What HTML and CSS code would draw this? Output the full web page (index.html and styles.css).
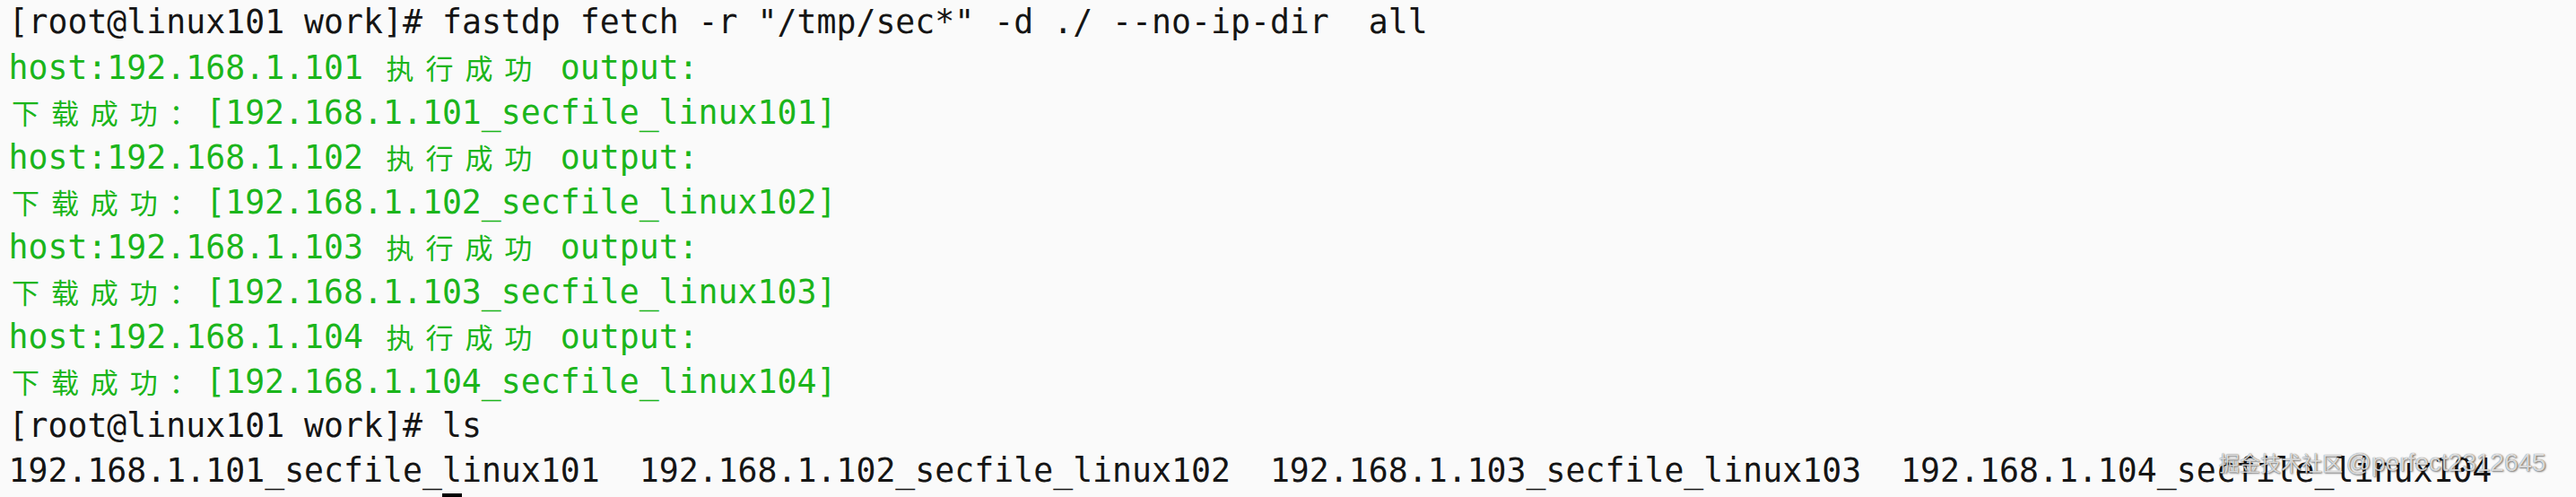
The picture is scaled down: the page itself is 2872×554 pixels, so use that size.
FILE: index.html
```html
<!DOCTYPE html>
<html lang="zh-CN">
<head>
<meta charset="utf-8">
<title>terminal</title>
<link rel="stylesheet" href="styles.css">
</head>
<body>
<div class="term">
  <div class="line">[root@linux101 work]# fastdp fetch -r "/tmp/sec*" -d ./ --no-ip-dir  all</div>
  <div class="line ok">host:192.168.1.101 <span class="w">执</span><span class="w">行</span><span class="w">成</span><span class="w">功</span> output:</div>
  <div class="line ok"><span class="w">下</span><span class="w">载</span><span class="w">成</span><span class="w">功</span><span class="w">：</span>[192.168.1.101_secfile_linux101]</div>
  <div class="line ok">host:192.168.1.102 <span class="w">执</span><span class="w">行</span><span class="w">成</span><span class="w">功</span> output:</div>
  <div class="line ok"><span class="w">下</span><span class="w">载</span><span class="w">成</span><span class="w">功</span><span class="w">：</span>[192.168.1.102_secfile_linux102]</div>
  <div class="line ok">host:192.168.1.103 <span class="w">执</span><span class="w">行</span><span class="w">成</span><span class="w">功</span> output:</div>
  <div class="line ok"><span class="w">下</span><span class="w">载</span><span class="w">成</span><span class="w">功</span><span class="w">：</span>[192.168.1.103_secfile_linux103]</div>
  <div class="line ok">host:192.168.1.104 <span class="w">执</span><span class="w">行</span><span class="w">成</span><span class="w">功</span> output:</div>
  <div class="line ok"><span class="w">下</span><span class="w">载</span><span class="w">成</span><span class="w">功</span><span class="w">：</span>[192.168.1.104_secfile_linux104]</div>
  <div class="line">[root@linux101 work]# ls</div>
  <div class="line">192.168.1.101_secfile_linux101  192.168.1.102_secfile_linux102  192.168.1.103_secfile_linux103  192.168.1.104_secfile_linux104</div>
  <div class="cursor-row"><span class="cursor"></span></div>
</div>
<div class="watermark"><span class="wm-cjk">掘金技术社区</span> <span class="wm-lat">@perfect2312645</span></div>
</body>
</html>
```

FILE: styles.css
```css
html, body {
  margin: 0;
  padding: 0;
  background: #fafafa;
  overflow: hidden;
}
body {
  width: 2872px;
  height: 554px;
  position: relative;
}
.term {
  padding-left: 9.5px;
  font-family: "DejaVu Sans Mono", "Noto Sans CJK SC", monospace;
  font-size: 36.5px;
  color: #151515;
}
.line {
  height: 50px;
  line-height: 50px;
  white-space: pre;
}
.ok {
  color: #1bb51b;
}
.w {
  display: inline-block;
  width: 43.94px;
  text-align: center;
  font-family: "Noto Sans CJK SC", sans-serif;
  font-size: 31px;
  line-height: 50px;
  vertical-align: baseline;
  text-indent: -6px;
}
.cursor-row {
  display: flex;
  height: 4px;
  padding-left: 483.3px;
}
.cursor {
  width: 22px;
  height: 4px;
  background: #000;
}
.watermark {
  position: absolute;
  left: 2474px;
  top: 500px;
  line-height: 30px;
  white-space: nowrap;
  color: rgba(255, 255, 255, 0.78);
  text-shadow: 0 0 1px rgba(0, 0, 0, 0.6), 1px 1px 2px rgba(0, 0, 0, 0.5);
  font-family: "Noto Sans CJK SC", "Liberation Sans", sans-serif;
}
.wm-cjk {
  font-size: 23px;
}
.wm-lat {
  font-family: "Liberation Sans", sans-serif;
  font-size: 28px;
}
```
